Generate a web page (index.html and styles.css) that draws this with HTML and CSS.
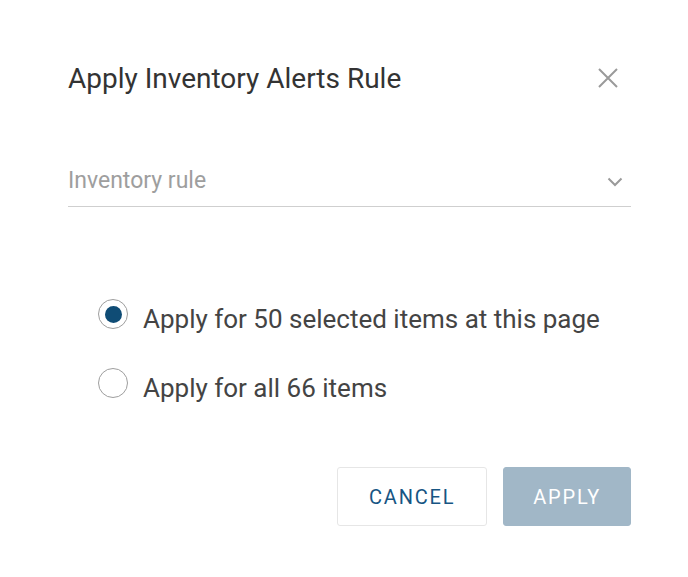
FILE: index.html
```html
<!DOCTYPE html>
<html lang="en">
<head>
  <meta charset="UTF-8">
  <meta name="viewport" content="width=device-width, initial-scale=1.0">
  <title>Apply Inventory Alerts Rule</title>
  <link rel="stylesheet" href="styles.css">
</head>

<body>

  <div class="dialog">
    <div class="dialog-header">
      <h2 class="dialog-title">Apply Inventory Alerts Rule</h2>
      <button class="close-btn" aria-label="Close">
        <svg width="20" height="20" viewBox="0 0 20 20">
          <path d="M1 1 L19 19 M19 1 L1 19" stroke="#9a9a9a" stroke-width="2" fill="none"/>
        </svg>
      </button>
    </div>

    <div class="select-field">
      <span class="placeholder">Inventory rule</span>
      <svg class="chevron" width="16" height="10" viewBox="0 0 16 10">
        <path d="M1.5 1.5 L8 8 L14.5 1.5" stroke="#9a9a9a" stroke-width="2" fill="none"/>
      </svg>
    </div>

    <div class="radio-group">
      <label class="radio-row">
        <span class="radio checked"><span class="dot"></span></span>
        <span class="radio-label">Apply for 50 selected items at this page</span>
      </label>
      <label class="radio-row">
        <span class="radio"></span>
        <span class="radio-label">Apply for all 66 items</span>
      </label>
    </div>

    <div class="actions">
      <button class="btn btn-cancel">Cancel</button>
      <button class="btn btn-apply">Apply</button>
    </div>
  </div>

</body>

</html>
```

FILE: styles.css
```css
body {
  margin: 0;
  background-color: #fff;
  font-family: Roboto, "Liberation Sans", Arial, sans-serif;
  color: #333;
}

.dialog {
  padding: 62px 57px 0 68px;
}

.dialog-header {
  display: flex;
  align-items: center;
  justify-content: space-between;
  height: 33px;
}

.dialog-title {
  margin: 0;
  font-size: 28px;
  font-weight: 400;
  line-height: 33px;
  color: #333;
}

.close-btn {
  display: flex;
  align-items: center;
  justify-content: center;
  width: 20px;
  height: 20px;
  margin-right: 13px;
  margin-top: -2px;
  padding: 0;
  border: none;
  background: none;
  cursor: pointer;
}

.select-field {
  display: flex;
  align-items: center;
  justify-content: space-between;
  margin-top: 72px;
  padding-bottom: 12px;
  border-bottom: 1px solid #cfcfcf;
}

.placeholder {
  font-size: 23px;
  line-height: 27px;
  color: #9e9e9e;
}

.chevron {
  margin-right: 8px;
  margin-top: 3px;
}

.radio-group {
  display: flex;
  flex-direction: column;
  gap: 39px;
  margin-top: 97px;
  padding-left: 30px;
}

.radio-row {
  display: flex;
  align-items: center;
  gap: 15px;
  cursor: pointer;
}

.radio {
  display: flex;
  align-items: center;
  justify-content: center;
  box-sizing: border-box;
  width: 30px;
  height: 30px;
  border: 1px solid #9e9e9e;
  border-radius: 50%;
  margin-top: -10px;
}

.dot {
  width: 17px;
  height: 17px;
  border-radius: 50%;
  background-color: #0f4c75;
}

.radio-label {
  font-size: 26px;
  line-height: 30px;
  color: #444;
}

.actions {
  display: flex;
  justify-content: flex-end;
  gap: 16px;
  margin-top: 64px;
}

.btn {
  height: 59px;
  border-radius: 3px;
  font-family: Roboto, "Liberation Sans", Arial, sans-serif;
  font-size: 20px;
  letter-spacing: 1.8px;
  text-transform: uppercase;
  cursor: pointer;
}

.btn-cancel {
  padding: 0 31px;
  border: 1px solid #e6e6e6;
  background-color: #fff;
  color: #175583;
}

.btn-apply {
  padding: 0 29px;
  border: 1px solid #a1b7c7;
  background-color: #a1b7c7;
  color: #fff;
}
```
